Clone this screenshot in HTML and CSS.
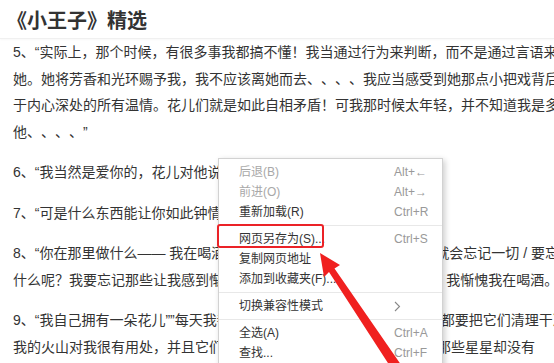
FILE: index.html
```html
<!DOCTYPE html>
<html lang="zh-CN">
<head>
    <meta charset="UTF-8">
    <meta name="viewport" content="width=device-width, initial-scale=1.0">
    <title>《小王子》精选</title>
    <link rel="stylesheet" href="styles.css">
</head>
<body>
    <div class="page">
        <div class="head">
            <h1>《小王子》精选</h1>
        </div>

        <div class="article">
            <p>5、“实际上，那个时候，有很多事我都搞不懂！我当通过行为来判断，而不是通过言语来判断<br>她。她将芳香和光环赐予我，我不应该离她而去、、、、我应当感受到她那点小把戏背后隐藏<br>于内心深处的所有温情。花儿们就是如此自相矛盾！可我那时候太年轻，并不知道我是多么爱<br>他、、、、”</p>
            <p>6、“我当然是爱你的，花儿对他说。”</p>
            <p>7、“可是什么东西能让你如此钟情呢？”</p>
            <p>8、“你在那里做什么—— 我在喝酒。你为什么喝酒？为了忘记，喝了就会忘记一切 / 要忘记<br>什么呢？我要忘记那些让我感到惭愧的东西。“你感到惭愧的是什么？” 我惭愧我在喝酒。</p>
            <p>9、“我自己拥有一朵花儿””每天我都给她浇水。我有三座火山，每周我都要把它们清理干净<br>我的火山对我很有用处，并且它们对我的花儿也同样很有用处。可是 那些星星却没有</p>
        </div>

        <!-- 右键菜单 -->
        <ul class="menu">
            <li class="off"><span class="txt">后退(B)</span><span class="key">Alt+←</span></li>
            <li class="off"><span class="txt">前进(O)</span><span class="key">Alt+→</span></li>
            <li><span class="txt">重新加载(R)</span><span class="key">Ctrl+R</span></li>
            <li class="sep"></li>
            <li><span class="txt">网页另存为(S)...</span><span class="key">Ctrl+S</span></li>
            <li><span class="txt">复制网页地址</span><span class="key"></span></li>
            <li><span class="txt">添加到收藏夹(F)...</span><span class="key"></span></li>
            <li class="sep"></li>
            <li><span class="txt">切换兼容性模式</span><span class="key more"><svg width="7" height="11" viewBox="0 0 7 11"><path d="M1 1l4.5 4.5L1 10" fill="none" stroke="#888" stroke-width="1.1"/></svg></span></li>
            <li class="sep"></li>
            <li><span class="txt">全选(A)</span><span class="key">Ctrl+A</span></li>
            <li><span class="txt">查找...</span><span class="key">Ctrl+F</span></li>
        </ul>

        <!-- 标注 -->
        <div class="mark"></div>
        <svg class="arrow" width="554" height="363" viewBox="0 0 554 363">
            <polygon points="320,253 340,265 334.5,268.5 406,372 397,377 329,272 324,277" fill="#f0201f"/>
        </svg>
    </div>
</body>
</html>
```

FILE: styles.css
```css
*{
    padding: 0;
    margin: 0;
}
ul,ol{
    list-style: none;
}
body{
    font-family: "Liberation Sans", "Noto Sans CJK SC", sans-serif;
    color: #333;
    background-color: #fff;
    overflow: hidden;
    text-spacing-trim: space-all;
}
.page{
    width: 554px;
    height: 363px;
    position: relative;
    overflow: hidden;
}
.head{
    height: 38px;
    padding-left: 7px;
    border-bottom: 1px solid #f0f0f0;
    box-shadow: 0 1px 2px rgba(0, 0, 0, 0.03);
}
.head h1{
    font-family: "Noto Sans CJK SC", sans-serif;
    font-size: 20px;
    font-weight: bold;
    line-height: 40px;
    color: #333;
}
.article{
    padding-left: 13px;
    font-size: 14px;
    line-height: 26.5px;
    white-space: nowrap;
}
.article p{
    margin-bottom: 14px;
}

/* 右键菜单 */
.menu{
    width: 223px;
    height: 220px;
    padding-top: 3px;
    position: absolute;
    left: 218px;
    top: 158px;
    background-color: #fff;
    border: 1px solid #d2d2d2;
    box-shadow: 2px 2px 6px rgba(0, 0, 0, 0.2);
    font-size: 12px;
    color: #333;
}
.menu li{
    display: flex;
    height: 20px;
    line-height: 20px;
    padding-left: 20px;
}
.menu li .txt{
    flex: 1;
}
.menu li .key{
    width: 48px;
    color: #999;
}
.menu li.off{
    color: #a8a8a8;
}
.menu li.sep{
    height: 1px;
    margin: 3px 0;
    padding: 0;
    background-color: #e8e8e8;
}
.menu li .more{
    padding-left: 27px;
    display: flex;
    align-items: center;
}

/* 标注 */
.mark{
    width: 103px;
    height: 20px;
    position: absolute;
    left: 217px;
    top: 224px;
    border: 2.5px solid #eb2227;
    border-radius: 3px;
}
.arrow{
    position: absolute;
    left: 0;
    top: 0;
}
```
